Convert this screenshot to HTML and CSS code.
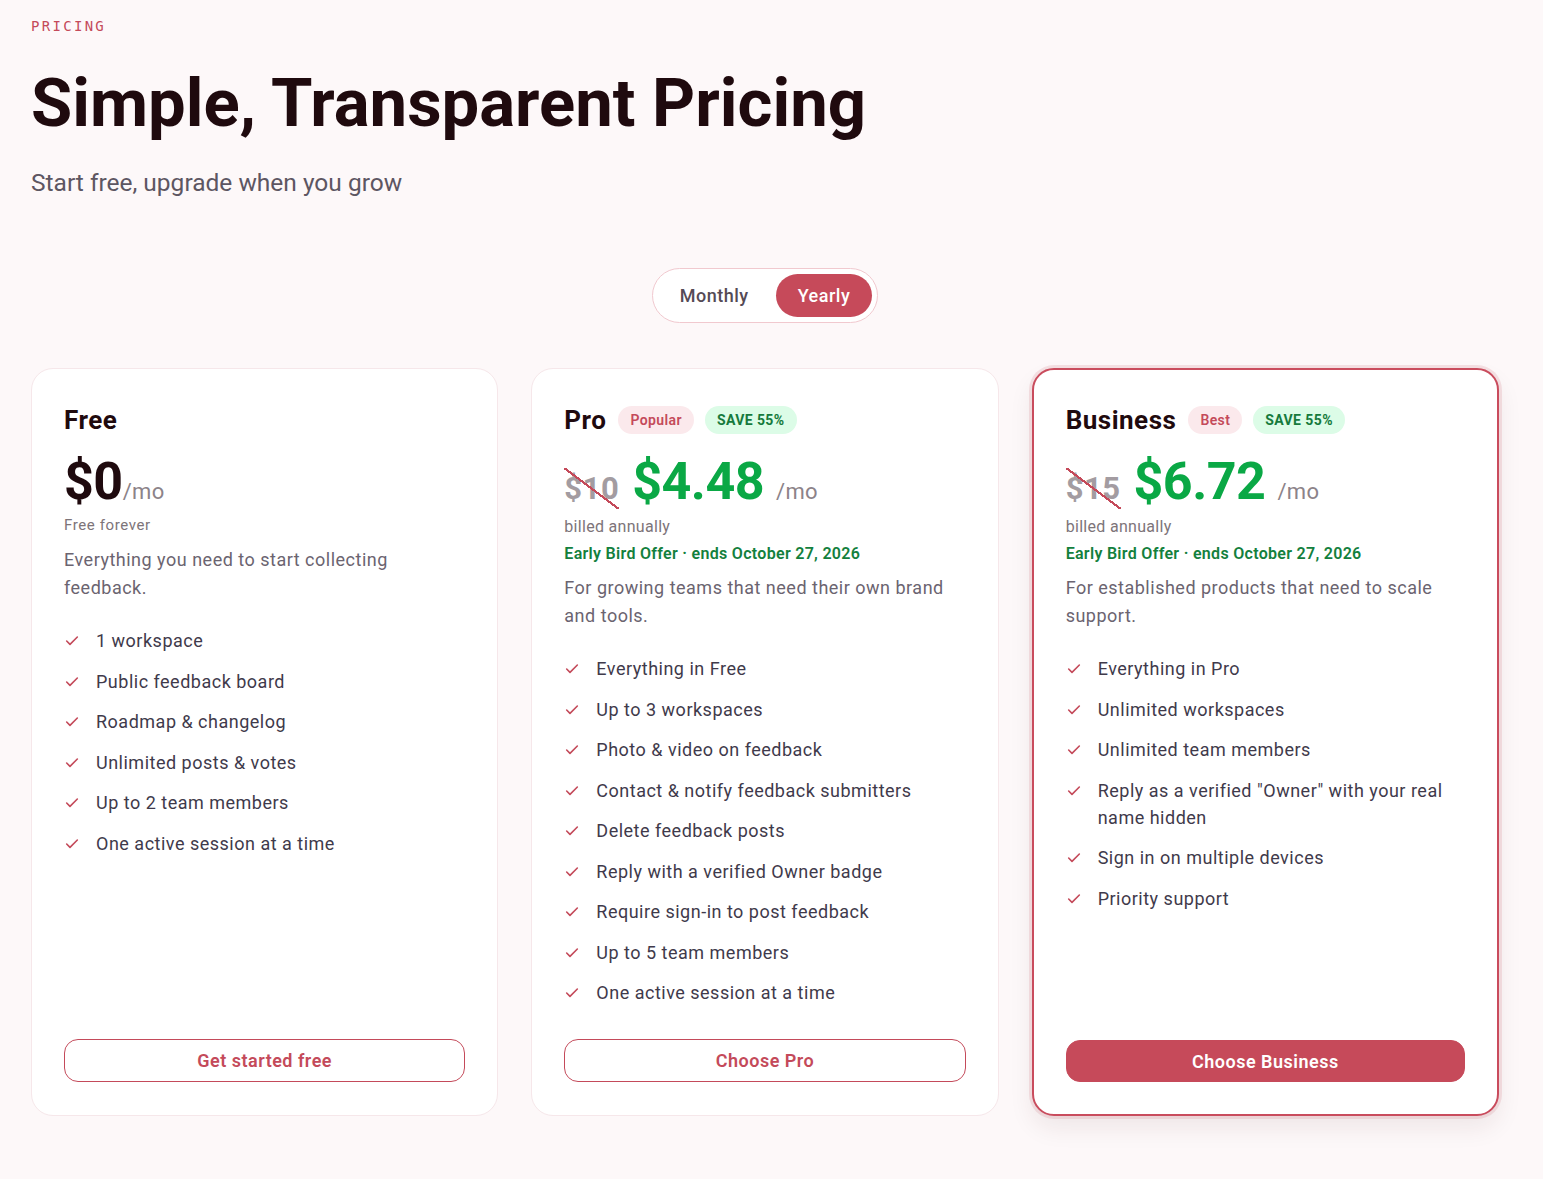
FILE: index.html
```html
<!DOCTYPE html>
<html lang="en">
<head>
<meta charset="utf-8">
<title>Pricing</title>
<link rel="stylesheet" href="styles.css">
</head>
<body>
<main class="page">
  <header class="hero">
    <div class="eyebrow">PRICING</div>
    <h1 class="title">Simple, Transparent Pricing</h1>
    <p class="subtitle">Start free, upgrade when you grow</p>
  </header>

  <div class="toggle-wrap">
    <div class="toggle">
      <button class="toggle-btn">Monthly</button>
      <button class="toggle-btn active">Yearly</button>
    </div>
  </div>

  <section class="plans">
    <article class="card">
      <div class="card-head">
        <h2 class="plan-name">Free</h2>
      </div>
      <div class="price-row">
        <span class="price">$0</span><span class="per">/mo</span>
      </div>
      <div class="note forever">Free forever</div>
      <p class="desc">Everything you need to start collecting feedback.</p>
      <ul class="features">
        <li><svg class="check" viewBox="0 0 24 24"><polyline points="20 6 9 17 4 12"/></svg><span>1 workspace</span></li>
        <li><svg class="check" viewBox="0 0 24 24"><polyline points="20 6 9 17 4 12"/></svg><span>Public feedback board</span></li>
        <li><svg class="check" viewBox="0 0 24 24"><polyline points="20 6 9 17 4 12"/></svg><span>Roadmap &amp; changelog</span></li>
        <li><svg class="check" viewBox="0 0 24 24"><polyline points="20 6 9 17 4 12"/></svg><span>Unlimited posts &amp; votes</span></li>
        <li><svg class="check" viewBox="0 0 24 24"><polyline points="20 6 9 17 4 12"/></svg><span>Up to 2 team members</span></li>
        <li><svg class="check" viewBox="0 0 24 24"><polyline points="20 6 9 17 4 12"/></svg><span>One active session at a time</span></li>
      </ul>
      <button class="cta outline">Get started free</button>
    </article>

    <article class="card">
      <div class="card-head">
        <h2 class="plan-name">Pro</h2>
        <span class="badge pink">Popular</span>
        <span class="badge green">SAVE 55%</span>
      </div>
      <div class="price-row">
        <span class="old">$10</span>
        <span class="price sale">$4.48</span>
        <span class="per">/mo</span>
      </div>
      <div class="note billed">billed annually</div>
      <div class="offer">Early Bird Offer · ends October 27, 2026</div>
      <p class="desc">For growing teams that need their own brand and tools.</p>
      <ul class="features">
        <li><svg class="check" viewBox="0 0 24 24"><polyline points="20 6 9 17 4 12"/></svg><span>Everything in Free</span></li>
        <li><svg class="check" viewBox="0 0 24 24"><polyline points="20 6 9 17 4 12"/></svg><span>Up to 3 workspaces</span></li>
        <li><svg class="check" viewBox="0 0 24 24"><polyline points="20 6 9 17 4 12"/></svg><span>Photo &amp; video on feedback</span></li>
        <li><svg class="check" viewBox="0 0 24 24"><polyline points="20 6 9 17 4 12"/></svg><span>Contact &amp; notify feedback submitters</span></li>
        <li><svg class="check" viewBox="0 0 24 24"><polyline points="20 6 9 17 4 12"/></svg><span>Delete feedback posts</span></li>
        <li><svg class="check" viewBox="0 0 24 24"><polyline points="20 6 9 17 4 12"/></svg><span>Reply with a verified Owner badge</span></li>
        <li><svg class="check" viewBox="0 0 24 24"><polyline points="20 6 9 17 4 12"/></svg><span>Require sign-in to post feedback</span></li>
        <li><svg class="check" viewBox="0 0 24 24"><polyline points="20 6 9 17 4 12"/></svg><span>Up to 5 team members</span></li>
        <li><svg class="check" viewBox="0 0 24 24"><polyline points="20 6 9 17 4 12"/></svg><span>One active session at a time</span></li>
      </ul>
      <button class="cta outline">Choose Pro</button>
    </article>

    <article class="card featured">
      <div class="card-head">
        <h2 class="plan-name">Business</h2>
        <span class="badge pink">Best</span>
        <span class="badge green">SAVE 55%</span>
      </div>
      <div class="price-row">
        <span class="old">$15</span>
        <span class="price sale">$6.72</span>
        <span class="per">/mo</span>
      </div>
      <div class="note billed">billed annually</div>
      <div class="offer">Early Bird Offer · ends October 27, 2026</div>
      <p class="desc">For established products that need to scale support.</p>
      <ul class="features">
        <li><svg class="check" viewBox="0 0 24 24"><polyline points="20 6 9 17 4 12"/></svg><span>Everything in Pro</span></li>
        <li><svg class="check" viewBox="0 0 24 24"><polyline points="20 6 9 17 4 12"/></svg><span>Unlimited workspaces</span></li>
        <li><svg class="check" viewBox="0 0 24 24"><polyline points="20 6 9 17 4 12"/></svg><span>Unlimited team members</span></li>
        <li><svg class="check" viewBox="0 0 24 24"><polyline points="20 6 9 17 4 12"/></svg><span>Reply as a verified "Owner" with your real name hidden</span></li>
        <li><svg class="check" viewBox="0 0 24 24"><polyline points="20 6 9 17 4 12"/></svg><span>Sign in on multiple devices</span></li>
        <li><svg class="check" viewBox="0 0 24 24"><polyline points="20 6 9 17 4 12"/></svg><span>Priority support</span></li>
      </ul>
      <button class="cta solid">Choose Business</button>
    </article>
  </section>
</main>
</body>
</html>
```
FILE: styles.css
```css
* { box-sizing: border-box; }
html, body { margin: 0; padding: 0; }
body {
  background: #fdf8f9;
  font-family: Roboto, "Liberation Sans", sans-serif;
  color: #3f3a4b;
}
.page {
  width: 1468px;
  margin-left: 31px;
  padding-top: 16px;
  padding-bottom: 64px;
}
.eyebrow {
  font-family: "DejaVu Sans Mono", "Liberation Mono", monospace;
  font-size: 14px;
  line-height: 20px;
  letter-spacing: 2.3px;
  color: #c44a5a;
}
.title {
  margin: 30px 0 0;
  font-size: 67px;
  line-height: 74px;
  font-weight: 700;
  color: #1f0a0e;
}
.subtitle {
  margin: 27px 0 0;
  font-size: 24.5px;
  line-height: 32px;
  color: #5d5662;
}
.toggle-wrap {
  display: flex;
  justify-content: center;
  margin-top: 69px;
}
.toggle {
  display: flex;
  gap: 5px;
  padding: 5px;
  background: #fff;
  border: 1px solid #f1c9cf;
  border-radius: 999px;
}
.toggle-btn {
  font-family: inherit;
  font-size: 18px;
  font-weight: 500;
  line-height: 27px;
  letter-spacing: 0.5px;
  padding: 8px 22px;
  border: 0;
  border-radius: 999px;
  background: transparent;
  color: #554a55;
}
.toggle-btn.active {
  background: #c64a5a;
  color: #fff;
}
.plans {
  display: grid;
  grid-template-columns: repeat(3, 1fr);
  gap: 33px;
  margin-top: 45px;
}
.card {
  display: flex;
  flex-direction: column;
  background: #fff;
  border: 1px solid #f6e7ea;
  border-radius: 22px;
  padding: 32px 32px 33px;
}
.card.featured {
  border: 2px solid #c94c5d;
  padding: 31px 32px 32px;
  box-shadow: 0 0 0 3px rgba(201, 76, 93, 0.14), 0 12px 24px rgba(60, 20, 30, 0.08);
}
.card-head {
  display: flex;
  align-items: center;
  gap: 11px;
  height: 38px;
}
.plan-name {
  margin: 0 1px 0 0;
  font-size: 26px;
  line-height: 38px;
  font-weight: 700;
  letter-spacing: 0.5px;
  color: #1f0a0e;
}
.badge {
  display: inline-flex;
  align-items: center;
  height: 28px;
  padding: 0 12px;
  border-radius: 999px;
  font-size: 14px;
  font-weight: 600;
  letter-spacing: 0.4px;
}
.badge.pink { background: #fbe9ec; color: #c44a5a; }
.badge.green { background: #dcfce7; color: #157a3c; font-weight: 700; }
.price-row {
  display: flex;
  align-items: baseline;
  margin-top: 13px;
  height: 60px;
  line-height: 60px;
}
.price {
  font-size: 52px;
  font-weight: 700;
  color: #1f0a0e;
  letter-spacing: -0.5px;
}
.price.sale { color: #0aa845; margin-right: 12px; }
.old {
  position: relative;
  font-size: 31px;
  font-weight: 700;
  color: #a39ca1;
  margin-right: 13px;
  line-height: 40px;
  letter-spacing: 0.5px;
}
.old::after {
  content: "";
  position: absolute;
  left: 0;
  right: 0;
  top: -1px;
  bottom: 0;
  background: linear-gradient(to top right, transparent calc(50% - 1.1px), #c44a5a calc(50% - 1.1px), #c44a5a calc(50% + 1.1px), transparent calc(50% + 1.1px));
}
.per {
  font-size: 22px;
  color: #8c8389;
  letter-spacing: 0.3px;
}
.note {
  margin-top: 3px;
  font-size: 15px;
  line-height: 20px;
  color: #7d7479;
  letter-spacing: 0.6px;
}
.note.forever { margin-bottom: 1px; }
.note.billed { font-size: 16px; margin-top: 5px; letter-spacing: 0.3px; }
.offer {
  margin-top: 7px;
  font-size: 16px;
  line-height: 20px;
  font-weight: 600;
  letter-spacing: 0.3px;
  color: #13803d;
}
.desc {
  margin: 10px 0 0;
  font-size: 18px;
  line-height: 27.5px;
  letter-spacing: 0.5px;
  color: #6b6470;
}
.features {
  list-style: none;
  margin: 26px 0 33px;
  padding: 0;
  display: flex;
  flex-direction: column;
  gap: 13.5px;
}
.features li {
  display: flex;
  align-items: flex-start;
  gap: 16px;
  font-size: 18px;
  line-height: 27px;
  letter-spacing: 0.5px;
  color: #3f3a4b;
}
.check {
  flex: 0 0 16px;
  width: 16px;
  height: 16px;
  margin-top: 6px;
  fill: none;
  stroke: #c44a5a;
  stroke-width: 2.4;
  stroke-linecap: round;
  stroke-linejoin: round;
}
.cta {
  margin-top: auto;
  height: 43px;
  border-radius: 14px;
  font-family: inherit;
  font-size: 18px;
  font-weight: 600;
  letter-spacing: 0.5px;
  cursor: pointer;
}
.cta.outline {
  background: #fff;
  border: 1px solid #c44a5a;
  color: #c44a5a;
}
.cta.solid {
  background: #c64a5a;
  border: 1px solid #c64a5a;
  color: #fff;
  height: 42px;
}
```
